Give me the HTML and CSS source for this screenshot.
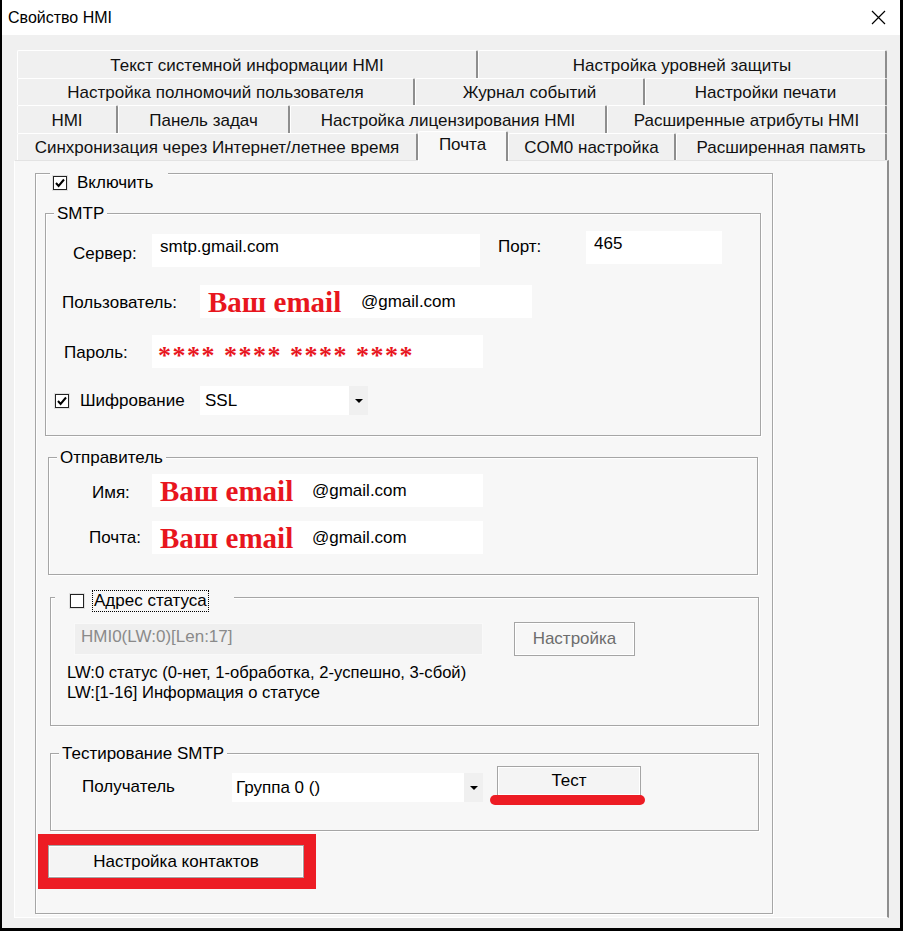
FILE: index.html
```html
<!DOCTYPE html>
<html lang="ru">
<head>
    <meta charset="UTF-8">
    <title>Свойство HMI</title>
    <link rel="stylesheet" href="styles.css">
</head>
<body>
    <div class="window">
        <div class="titlebar">
            <span class="title">Свойство HMI</span>
            <svg class="close" viewBox="0 0 15 15"><path d="M1 1L14 14M14 1L1 14" stroke="#000" stroke-width="1.2" fill="none"/></svg>
        </div>

        <div class="dialog">
            <!-- tab strip, 4 rows -->
            <div class="tabs">
                <div class="tab-row row1">
                    <div class="tab">Текст системной информации HMI</div>
                    <div class="tab">Настройка уровней защиты</div>
                </div>
                <div class="tab-row row2">
                    <div class="tab">Настройка полномочий пользователя</div>
                    <div class="tab">Журнал событий</div>
                    <div class="tab">Настройки печати</div>
                </div>
                <div class="tab-row row3">
                    <div class="tab">HMI</div>
                    <div class="tab">Панель задач</div>
                    <div class="tab">Настройка лицензирования HMI</div>
                    <div class="tab">Расширенные атрибуты HMI</div>
                </div>
                <div class="tab-row row4">
                    <div class="tab">Синхронизация через Интернет/летнее время</div>
                    <div class="tab active">Почта</div>
                    <div class="tab">COM0 настройка</div>
                    <div class="tab">Расширенная память</div>
                </div>
            </div>

            <div class="panel">
                <div class="group main-group">
                    <div class="check-title enable-title">
                        <span class="checkbox"><svg viewBox="0 0 12 12"><path d="M2 6l2.6 3L10 2.5" stroke="#000" stroke-width="2" fill="none"/></svg></span>
                        <span>Включить</span>
                    </div>

                    <!-- SMTP -->
                    <div class="group smtp">
                        <div class="group-title">SMTP</div>
                        <div class="row server-row">
                            <span class="lbl-server">Сервер:</span>
                            <div class="field in-server">smtp.gmail.com</div>
                            <span class="lbl-port">Порт:</span>
                            <div class="field in-port">465</div>
                        </div>
                        <div class="row user-row">
                            <span class="lbl-user">Пользователь:</span>
                            <div class="field mail-field in-user"><span class="mark mark-user">Ваш email</span><span>@gmail.com</span></div>
                        </div>
                        <div class="row pass-row">
                            <span class="lbl-pass">Пароль:</span>
                            <div class="field in-pass"><span class="stars">**** **** **** ****</span></div>
                        </div>
                        <div class="row ssl-row">
                            <span class="checkbox ssl-check"><svg viewBox="0 0 12 12"><path d="M2 6l2.6 3L10 2.5" stroke="#000" stroke-width="2" fill="none"/></svg></span>
                            <span class="lbl-ssl">Шифрование</span>
                            <div class="select sel-ssl"><span class="sel-text">SSL</span><span class="sel-arrow"></span></div>
                        </div>
                    </div>

                    <!-- Отправитель -->
                    <div class="group sender">
                        <div class="group-title">Отправитель</div>
                        <div class="row name-row">
                            <span class="lbl-name">Имя:</span>
                            <div class="field mail-field in-name"><span class="mark mark-sender">Ваш email</span><span>@gmail.com</span></div>
                        </div>
                        <div class="row post-row">
                            <span class="lbl-post">Почта:</span>
                            <div class="field mail-field in-name"><span class="mark mark-sender">Ваш email</span><span>@gmail.com</span></div>
                        </div>
                    </div>

                    <!-- Адрес статуса -->
                    <div class="group status">
                        <div class="check-title status-title">
                            <span class="checkbox"></span>
                            <span class="focus-label">Адрес статуса</span>
                        </div>
                        <div class="row addr-row">
                            <div class="field in-addr">HMI0(LW:0)[Len:17]</div>
                            <div class="btn btn-setup">Настройка</div>
                        </div>
                        <div class="status-info">
                            LW:0 статус (0-нет, 1-обработка, 2-успешно, 3-сбой)<br>
                            LW:[1-16] Информация о статусе
                        </div>
                    </div>

                    <!-- Тестирование SMTP -->
                    <div class="group test">
                        <div class="group-title">Тестирование SMTP</div>
                        <div class="row test-row">
                            <span class="lbl-recv">Получатель</span>
                            <div class="select sel-group"><span class="sel-text">Группа 0 ()</span><span class="sel-arrow"></span></div>
                            <div class="test-wrap">
                                <div class="btn btn-test">Тест</div>
                                <span class="underline"></span>
                            </div>
                        </div>
                    </div>

                    <div class="red-box">
                        <div class="btn btn-contacts">Настройка контактов</div>
                    </div>
                </div>
            </div>
        </div>
    </div>
</body>
</html>
```

FILE: styles.css
```css
* {
    box-sizing: border-box;
}
body {
    margin: 0;
    font-family: "Liberation Sans", Arial, sans-serif;
    font-size: 17px;
    color: #000;
    background-color: #f0f0f0;
}
.window {
    width: 903px;
    height: 931px;
    border-left: 2px solid #000;
    border-right: 3px solid #000;
    border-bottom: 3px solid #000;
    background-color: #f0f0f0;
}
.titlebar {
    height: 35px;
    background-color: #fff;
    display: flex;
    align-items: center;
    justify-content: space-between;
    padding: 0 14px 0 6px;
}
.title {
    font-size: 16px;
}
.close {
    width: 15px;
    height: 15px;
}
.dialog {
    padding: 15px 0 0 12px;
}

/* tabs */
.tabs {
    margin-left: 3px;
    width: 870px;
}
.tab-row {
    display: grid;
}
.row1 { grid-template-columns: 461px 409px; height: 28px; }
.row2 { grid-template-columns: 398px 230px 242px; height: 27px; }
.row3 { grid-template-columns: 101px 172px 317px 280px; height: 28px; }
.row4 { grid-template-columns: 401px 90px 168px 211px; height: 27px; }
.tab {
    display: flex;
    align-items: center;
    justify-content: center;
    padding-top: 2px;
    border-top: 1px solid #fff;
    border-left: 1px solid #fff;
    border-right: 2px solid #8e8e8e;
    border-radius: 2px 2px 0 0;
    white-space: nowrap;
    color: #111;
}
.tab.active {
    background-color: #f7f7f7;
    margin: -2px 0 -1px;
    padding: 0 0 4px;
    position: relative;
}

/* tab page */
.panel {
    width: 875px;
    height: 758px;
    background-color: #f7f7f7;
    border: 1px solid #fff;
    border-top-color: #e3e3e3;
    border-right: 2px solid #8e8e8e;
    padding: 12px 0 0 20px;
}
.group {
    border: 1px solid #a6a6a6;
    box-shadow: inset 1px 1px 0 #fff, 1px 1px 0 #fff;
}
.group-title {
    display: flex;
    width: fit-content;
    height: 18px;
    line-height: 18px;
    margin: -9px 0 0 8px;
    padding: 0 3px;
    background-color: #f7f7f7;
}
.check-title {
    display: flex;
    align-items: center;
    width: fit-content;
    background-color: #f7f7f7;
}
.checkbox {
    width: 14px;
    height: 14px;
    border: 1px solid #222;
    background-color: #fff;
    box-shadow: 0 0 0 1px #e0e0e0;
    flex-shrink: 0;
}
.checkbox svg {
    display: block;
    width: 12px;
    height: 12px;
}
.row {
    display: flex;
    align-items: flex-start;
}
.field {
    background-color: #fff;
    height: 33px;
    padding: 4px 0 0 8px;
    line-height: 18px;
    white-space: nowrap;
}
.select {
    display: flex;
    align-items: center;
    height: 29px;
    background-color: #fff;
}
.sel-text {
    flex: 1;
}
.sel-arrow {
    width: 19px;
    height: 100%;
    background-color: #f0f0f0;
    position: relative;
}
.sel-arrow::after {
    content: "";
    position: absolute;
    left: 6px;
    top: 13px;
    border-left: 4px solid transparent;
    border-right: 4px solid transparent;
    border-top: 4px solid #000;
}
.btn {
    display: flex;
    align-items: center;
    justify-content: center;
    border: 1px solid #a5a5a5;
    background-color: #f4f4f4;
    box-shadow: inset 0 0 0 1px #fff;
}

/* main group */
.main-group {
    width: 738px;
    height: 741px;
}
.enable-title {
    height: 26px;
    margin: -4px 0 0 14px;
    padding: 0 15px 0 3px;
    gap: 10px;
}

/* SMTP */
.smtp {
    width: 716px;
    margin: 17px 0 0 9px;
    padding-bottom: 20px;
}
.server-row { margin-top: 8px; }
.lbl-server { margin: 13px 0 0 27px; width: 79px; }
.in-server { width: 328px; margin-top: 3px; }
.lbl-port { margin: 6px 0 0 18px; width: 88px; }
.in-port { width: 136px; }
.user-row { margin-top: 18px; }
.lbl-user { margin: 8px 0 0 16px; width: 138px; }
.mail-field {
    display: flex;
    align-items: center;
    padding-top: 0;
}
.in-user { width: 332px; }
.mark {
    font-family: "Liberation Serif", "Times New Roman", serif;
    font-weight: bold;
    font-size: 29px;
    color: #e8161e;
}
.mark-user { width: 153px; }
.pass-row { margin-top: 17px; }
.lbl-pass { margin: 8px 0 0 18px; width: 88px; }
.in-pass {
    width: 331px;
    padding: 8px 0 0 6px;
}
.stars {
    font-family: "Liberation Serif", "Times New Roman", serif;
    font-weight: bold;
    font-size: 26px;
    line-height: 26px;
    letter-spacing: 1.5px;
    color: #e8161e;
}
.ssl-row {
    margin-top: 18px;
    align-items: center;
    height: 29px;
}
.ssl-check { margin-left: 9px; }
.lbl-ssl { margin-left: 11px; width: 120px; }
.sel-ssl { width: 168px; }
.sel-ssl .sel-text { padding-left: 5px; }

/* sender */
.sender {
    width: 710px;
    margin: 21px 0 0 12px;
    padding-bottom: 20px;
}
.name-row { margin-top: 7px; }
.lbl-name { margin: 9px 0 0 43px; width: 60px; }
.in-name { width: 331px; }
.mark-sender { width: 152px; }
.post-row { margin-top: 14px; }
.lbl-post { margin: 7px 0 0 40px; width: 63px; }

/* status address */
.status {
    width: 709px;
    margin: 22px 0 0 14px;
    padding-bottom: 22px;
}
.status-title {
    height: 24px;
    margin: -9px 0 0 4px;
    padding: 0 25px 0 15px;
    gap: 8px;
}
.focus-label {
    border: 1px dotted #000;
    padding: 0 1px;
    line-height: 20px;
}
.addr-row { margin-top: 9px; }
.in-addr {
    width: 409px;
    height: 32px;
    margin: 1px 0 0 23px;
    padding: 4px 0 0 6px;
    background-color: #efefef;
    border: 1px solid #f9f9f9;
    color: #8a8a8a;
}
.btn-setup {
    width: 121px;
    height: 34px;
    margin-left: 31px;
    color: #6d6d6d;
    background-color: #f7f7f7;
}
.status-info {
    margin: 7px 0 0 16px;
    line-height: 20px;
    font-size: 16.6px;
}

/* smtp test */
.test {
    width: 709px;
    margin: 27px 0 0 14px;
    padding-bottom: 28px;
}
.test-row { margin-top: 3px; }
.lbl-recv { margin: 11px 0 0 31px; width: 150px; }
.sel-group { width: 251px; margin-top: 7px; }
.sel-group .sel-text { padding-left: 4px; }
.test-wrap {
    position: relative;
    width: 144px;
    height: 30px;
    margin-left: 14px;
}
.btn-test {
    height: 30px;
}
.underline {
    position: absolute;
    left: -7px;
    top: 29px;
    width: 155px;
    height: 10px;
    border-radius: 5px;
    background-color: #ed1c24;
}

/* contacts */
.red-box {
    width: fit-content;
    margin: 3px 0 0 2px;
    border: solid #ed1c24;
    border-width: 11px 12px 11px 10px;
}
.btn-contacts {
    width: 256px;
    height: 33px;
}
```
